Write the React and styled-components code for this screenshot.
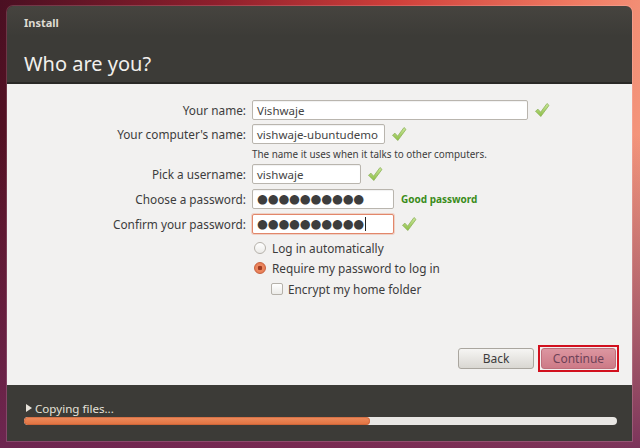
import React from 'react';
import styled, { createGlobalStyle } from 'styled-components';

const Global = createGlobalStyle`
    html, body {
        margin: 0;
        padding: 0;
        width: 640px;
        height: 448px;
        overflow: hidden;
    }
    body {
        font-family: "Noto Sans", "DejaVu Sans", sans-serif;
    }
`;

const Desktop = styled.div`
    width: 640px;
    height: 448px;
    box-sizing: border-box;
    padding: 6px 8px 7px 7px;
    background:
        linear-gradient(to bottom, rgba(90, 30, 70, 0) 30%, rgba(110, 40, 85, 0.9) 100%),
        linear-gradient(100deg, #4a0f22 0%, #8e1f2c 30%, #cf3f3a 55%, #ef7a62 80%, #f6a68c 100%);
`;

const Window = styled.div`
    height: 100%;
    display: flex;
    flex-direction: column;
    border-radius: 6px 6px 0 0;
    overflow: hidden;
    box-shadow: 0 0 0 1px rgba(255, 230, 240, 0.18);
`;

const Header = styled.div`
    height: 76px;
    background: linear-gradient(to bottom, #46443f, #3c3b37 40%);
    border-bottom: 2px solid #2a2926;
    padding: 0 17px;
    display: flex;
    flex-direction: column;
`;

const WindowTitle = styled.div`
    margin-top: 9px;
    font-size: 11px;
    font-weight: 700;
    color: #dfdbd2;
`;

const PageTitle = styled.div`
    margin-top: 20px;
    font-size: 20px;
    color: #f2f0ec;
`;

const Content = styled.div`
    flex: 1;
    background: #f2f1f0;
    display: flex;
    flex-direction: column;
    padding: 16px 13px 13px 0;
`;

const Form = styled.div`
    display: flex;
    flex-direction: column;
`;

const Row = styled.div`
    display: flex;
    align-items: center;
    height: ${p => p.h || 20}px;
    margin-top: ${p => p.mt || 0}px;
`;

const Label = styled.div`
    width: 239px;
    text-align: right;
    padding-right: 6px;
    font-size: 11.8px;
    color: #3c3c3c;
`;

const Input = styled.div`
    box-sizing: border-box;
    width: ${p => p.w}px;
    height: 20px;
    border: 1px solid ${p => (p.focus ? '#e2876a' : '#b9b5ae')};
    box-shadow: ${p => (p.focus ? '0 0 0 1px rgba(233,150,120,0.35)' : 'inset 0 1px 1px rgba(0,0,0,0.06)')};
    border-radius: 2px;
    background: #fff;
    font-size: 11.5px;
    color: #444;
    padding: 0 4px;
    display: flex;
    align-items: center;
    white-space: nowrap;
    overflow: hidden;
`;

const Dots = styled.span`
    font-family: "DejaVu Sans", sans-serif;
    font-size: 12.5px;
    letter-spacing: -0.2px;
    color: #3d3d3d;
    line-height: 1;
`;

const Caret = styled.span`
    display: inline-block;
    width: 1px;
    height: 14px;
    background: #222;
    margin-left: 1px;
`;

const Hint = styled.div`
    margin-left: 245px;
    font-size: 9.9px;
    color: #3c3c3c;
    height: 12px;
    line-height: 12px;
    margin-top: ${p => p.mt || 0}px;
`;

const Strength = styled.span`
    margin-left: 7px;
    font-size: 10px;
    font-weight: 700;
    color: #3a8c1a;
`;

const CheckWrap = styled.span`
    display: inline-flex;
    margin-left: ${p => p.ml || 8}px;
`;

const Option = styled.label`
    display: flex;
    align-items: center;
    height: ${p => p.h || 20}px;
    margin-left: ${p => p.indent}px;
    margin-top: ${p => p.mt || 0}px;
    font-size: 11.8px;
    color: #3c3c3c;
`;

const Radio = styled.span`
    box-sizing: border-box;
    width: 12px;
    height: 12px;
    border-radius: 50%;
    margin-right: 6px;
    border: 1px solid ${p => (p.on ? '#c8603d' : '#b5b1aa')};
    background: ${p => (p.on ? 'radial-gradient(circle, #9e3a20 0 2px, #ef8a62 2.6px, #e0744c 100%)' : 'linear-gradient(#ffffff, #ecebe8)')};
`;

const Box = styled.span`
    box-sizing: border-box;
    width: 12px;
    height: 12px;
    border-radius: 2px;
    margin-right: 5px;
    border: 1px solid #b5b1aa;
    background: linear-gradient(#ffffff, #ecebe8);
`;

const Spacer = styled.div`
    flex: 1;
`;

const Buttons = styled.div`
    display: flex;
    justify-content: flex-end;
    align-items: center;
    gap: 4px;
`;

const Button = styled.button`
    box-sizing: border-box;
    height: 21px;
    width: ${p => p.w}px;
    border-radius: 3px;
    font-family: "Noto Sans", sans-serif;
    font-size: 12px;
    padding: 0;
    border: 1px solid ${p => (p.primary ? '#bd6f7b' : '#aaa69f')};
    color: ${p => (p.primary ? '#6e4258' : '#3c3c3c')};
    background: ${p => (p.primary ? 'linear-gradient(#dc96a0, #cd7a87)' : 'linear-gradient(#f6f5f3, #d9d7d2)')};
`;

const Highlight = styled.div`
    border: 2px solid #d2101e;
    padding: 1px;
    display: flex;
`;

const Footer = styled.div`
    height: 56px;
    background: #3c3b37;
    padding: 16px 15px 0 17px;
    box-sizing: border-box;
    display: flex;
    flex-direction: column;
`;

const Status = styled.div`
    display: flex;
    align-items: center;
    font-size: 11.6px;
    color: #e6e2da;
    height: 14px;
`;

const Arrow = styled.span`
    width: 0;
    height: 0;
    border-top: 4px solid transparent;
    border-bottom: 4px solid transparent;
    border-left: 6px solid #e6e2da;
    margin: 0 3px 0 2px;
`;

const Track = styled.div`
    margin-top: 2px;
    height: 8px;
    border-radius: 4px;
    background: #e9e7e4;
    overflow: hidden;
`;

const Fill = styled.div`
    height: 100%;
    border-radius: 4px;
    background: linear-gradient(#ee8c5e, #e0713f);
    box-shadow: inset 0 0 0 1px rgba(190, 90, 50, 0.5);
`;

function Check({ ml }) {
    return (
        <CheckWrap ml={ml}>
            <svg width="16" height="16" viewBox="0 0 16 16">
                <defs>
                    <linearGradient id="cg" x1="0" y1="0" x2="0" y2="1">
                        <stop offset="0" stopColor="#cbe89a" />
                        <stop offset="1" stopColor="#8dbe45" />
                    </linearGradient>
                </defs>
                <path
                    d="M1.5 9.2 L4 7.2 L6.6 10.2 L13 1.5 L15 3.4 L6.8 14.5 Z"
                    fill="url(#cg)"
                    stroke="#8db35a"
                    strokeWidth="0.8"
                    strokeLinejoin="round"
                />
            </svg>
        </CheckWrap>
    );
}

export default function App() {
    const progress = 58.4;
    return (
        <Desktop>
            <Global />
            <Window>
                <Header>
                    <WindowTitle>Install</WindowTitle>
                    <PageTitle>Who are you?</PageTitle>
                </Header>
                <Content>
                    <Form>
                        <Row>
                            <Label>Your name:</Label>
                            <Input w={276}>Vishwaje</Input>
                            <Check ml={6} />
                        </Row>
                        <Row mt={4}>
                            <Label>Your computer's name:</Label>
                            <Input w={133}>vishwaje-ubuntudemo</Input>
                            <Check ml={6} />
                        </Row>
                        <Hint mt={4}>The name it uses when it talks to other computers.</Hint>
                        <Row mt={4}>
                            <Label>Pick a username:</Label>
                            <Input w={109}>vishwaje</Input>
                            <Check ml={6} />
                        </Row>
                        <Row mt={5}>
                            <Label>Choose a password:</Label>
                            <Input w={142}><Dots>●●●●●●●●●●</Dots></Input>
                            <Strength>Good password</Strength>
                        </Row>
                        <Row mt={5}>
                            <Label>Confirm your password:</Label>
                            <Input w={142} focus><Dots>●●●●●●●●●●</Dots><Caret /></Input>
                            <Check ml={7} />
                        </Row>
                        <Option indent={247} mt={4} h={20}>
                            <Radio />Log in automatically
                        </Option>
                        <Option indent={247} h={20}>
                            <Radio on />Require my password to log in
                        </Option>
                        <Option indent={264} mt={1} h={20}>
                            <Box />Encrypt my home folder
                        </Option>
                    </Form>
                    <Spacer />
                    <Buttons>
                        <Button w={76}>Back</Button>
                        <Highlight>
                            <Button w={75} primary>Continue</Button>
                        </Highlight>
                    </Buttons>
                </Content>
                <Footer>
                    <Status>
                        <Arrow />Copying files...
                    </Status>
                    <Track>
                        <Fill style={{ width: `${progress}%` }} />
                    </Track>
                </Footer>
            </Window>
        </Desktop>
    );
}
